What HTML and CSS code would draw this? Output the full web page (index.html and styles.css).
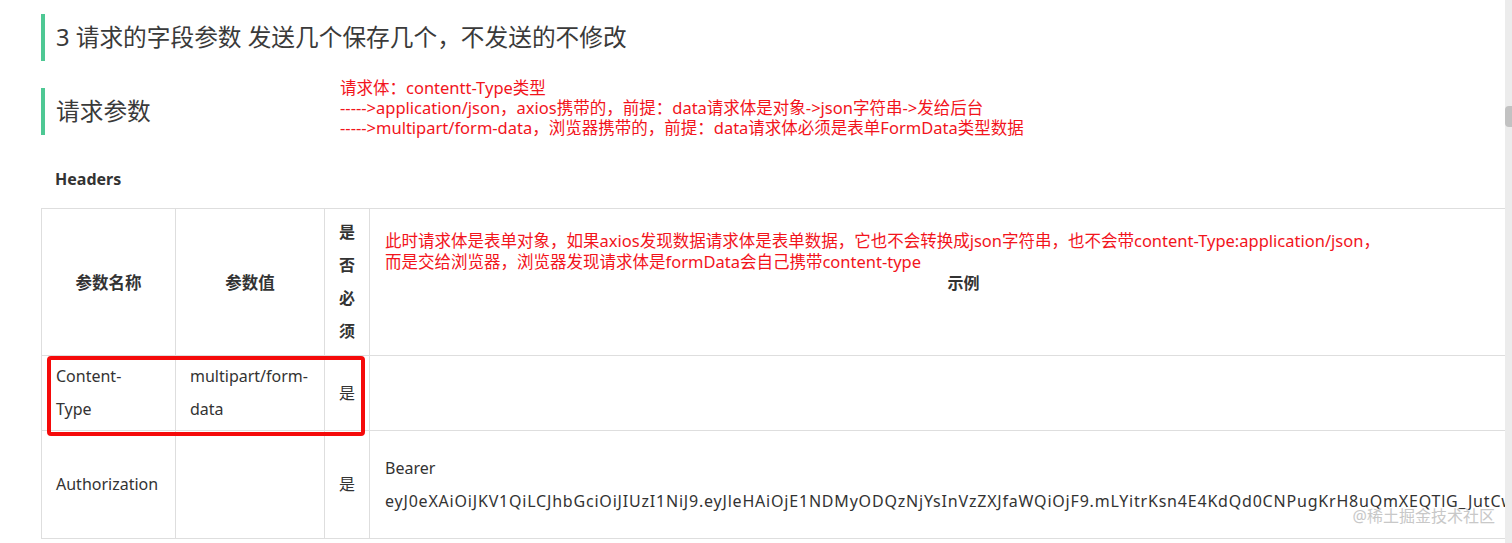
FILE: index.html
```html
<!DOCTYPE html>
<html lang="zh-CN">
<head>
    <meta charset="UTF-8">
    <meta name="viewport" content="width=device-width, initial-scale=1.0">
    <title>请求参数</title>
    <link rel="stylesheet" href="styles.css">
</head>
<body>
    <div class="page">
        <div class="content">
            <h2 class="section-title">3 请求的字段参数 发送几个保存几个，不发送的不修改</h2>

            <div class="section-row">
                <h3 class="section-title sub">请求参数</h3>
                <div class="note">
                    请求体：contentt-Type类型<br>
                    -----&gt;application/json，axios携带的，前提：data请求体是对象-&gt;json字符串-&gt;发给后台<br>
                    -----&gt;multipart/form-data，浏览器携带的，前提：data请求体必须是表单FormData类型数据
                </div>
            </div>

            <div class="label">Headers</div>

            <div class="table-wrap">
                <table class="params">
                    <colgroup>
                        <col class="col-name">
                        <col class="col-value">
                        <col class="col-required">
                        <col class="col-example">
                    </colgroup>
                    <thead>
                        <tr>
                            <th>参数名称</th>
                            <th>参数值</th>
                            <th class="required">是否必须</th>
                            <th class="example-head">
                                <div class="note cell-note">
                                    此时请求体是表单对象，如果axios发现数据请求体是表单数据，它也不会转换成json字符串，也不会带content-Type:application/json，<br>
                                    而是交给浏览器，浏览器发现请求体是formData会自己携带content-type
                                </div>
                                <div class="example-title">示例</div>
                            </th>
                        </tr>
                    </thead>
                    <tbody>
                        <tr class="row-type">
                            <td>Content-<br>Type</td>
                            <td>multipart/form-data</td>
                            <td class="required">是</td>
                            <td></td>
                        </tr>
                        <tr>
                            <td>Authorization</td>
                            <td></td>
                            <td class="required">是</td>
                            <td class="example">
                                Bearer<br>
                                <span class="token">eyJ0eXAiOiJKV1QiLCJhbGciOiJIUzI1NiJ9.eyJleHAiOjE1NDMyODQzNjYsInVzZXJfaWQiOjF9.mLYitrKsn4E4KdQd0CNPugKrH8uQmXEQTlG_JutCwQvLCqE</span>
                            </td>
                        </tr>
                    </tbody>
                </table>
                <div class="highlight"></div>
            </div>

            <div class="watermark">@稀土掘金技术社区</div>
        </div>
        <div class="scrollbar"><div class="thumb"></div></div>
    </div>
</body>
</html>
```

FILE: styles.css
```css
html, body {
    margin: 0;
    height: 100%;
    overflow: hidden;
    background: white;
}

body {
    font-family: 'Noto Sans', 'Noto Sans CJK SC', sans-serif;
    color: #333;
}

.page {
    display: flex;
    height: 100vh;
}

.content {
    flex: 1;
    min-width: 0;
    overflow: hidden;
    position: relative;
    padding: 14px 0 0 41px;
}

.scrollbar {
    width: 7px;
    background-color: #ececec;
}

.thumb {
    margin-top: 106px;
    height: 21px;
    background-color: #c2c2c2;
    border-radius: 4px 0 0 4px;
}

.section-title {
    margin: 0;
    height: 47px;
    line-height: 47px;
    border-left: 4px solid #4ec894;
    padding-left: 11px;
    font-size: 23.7px;
    font-weight: normal;
    color: #3a3a3a;
    white-space: nowrap;
}

.section-row {
    display: flex;
    align-items: flex-start;
    margin-top: 17px;
}

.section-title.sub {
    flex: 0 0 284px;
    margin-top: 10px;
}

.note {
    color: #f2141c;
    font-size: 16.5px;
    line-height: 20px;
    font-weight: normal;
    white-space: nowrap;
}

.label {
    margin-top: 29px;
    padding-left: 14px;
    font-size: 16px;
    line-height: 24px;
    font-weight: bold;
    color: #333;
}

.table-wrap {
    position: relative;
    margin-top: 17px;
    width: 1516px;
}

.params {
    border-collapse: collapse;
    table-layout: fixed;
    width: 1516px;
}

.col-name { width: 134px; }
.col-value { width: 149px; }
.col-required { width: 45px; }
.col-example { width: 1188px; }

.params th,
.params td {
    border: 1px solid #dedede;
    padding: 4px 14px;
    font-size: 16px;
    line-height: 33px;
    color: #333;
    text-align: left;
    vertical-align: middle;
}

.params th {
    padding: 7px 14px;
    font-size: 16.5px;
    font-weight: bold;
    text-align: center;
}

.params .required {
    padding-left: 14px;
    padding-right: 14px;
    text-align: center;
}

.params th.required {
    padding-left: 13px;
    padding-right: 13px;
    font-size: 16px;
}

.params th.example-head {
    vertical-align: top;
    padding: 21px 15px 0;
}

.cell-note {
    text-align: left;
    line-height: 21px;
}

.example-title {
    font-size: 16px;
    line-height: 21px;
    margin-top: 1px;
}

.params td.example {
    padding: 21px 15px 20px;
    white-space: nowrap;
    overflow: hidden;
}

.token {
    letter-spacing: 0.8px;
}

.highlight {
    position: absolute;
    left: 6px;
    top: 148px;
    width: 318px;
    height: 80px;
    box-sizing: border-box;
    border: 4px solid #f50a0a;
    border-radius: 4px;
}

.watermark {
    position: absolute;
    right: 10px;
    bottom: 16px;
    font-size: 16px;
    color: #c8c8c8;
    text-shadow: 0 0 1px white, 0 0 2px white;
    white-space: nowrap;
}
```
